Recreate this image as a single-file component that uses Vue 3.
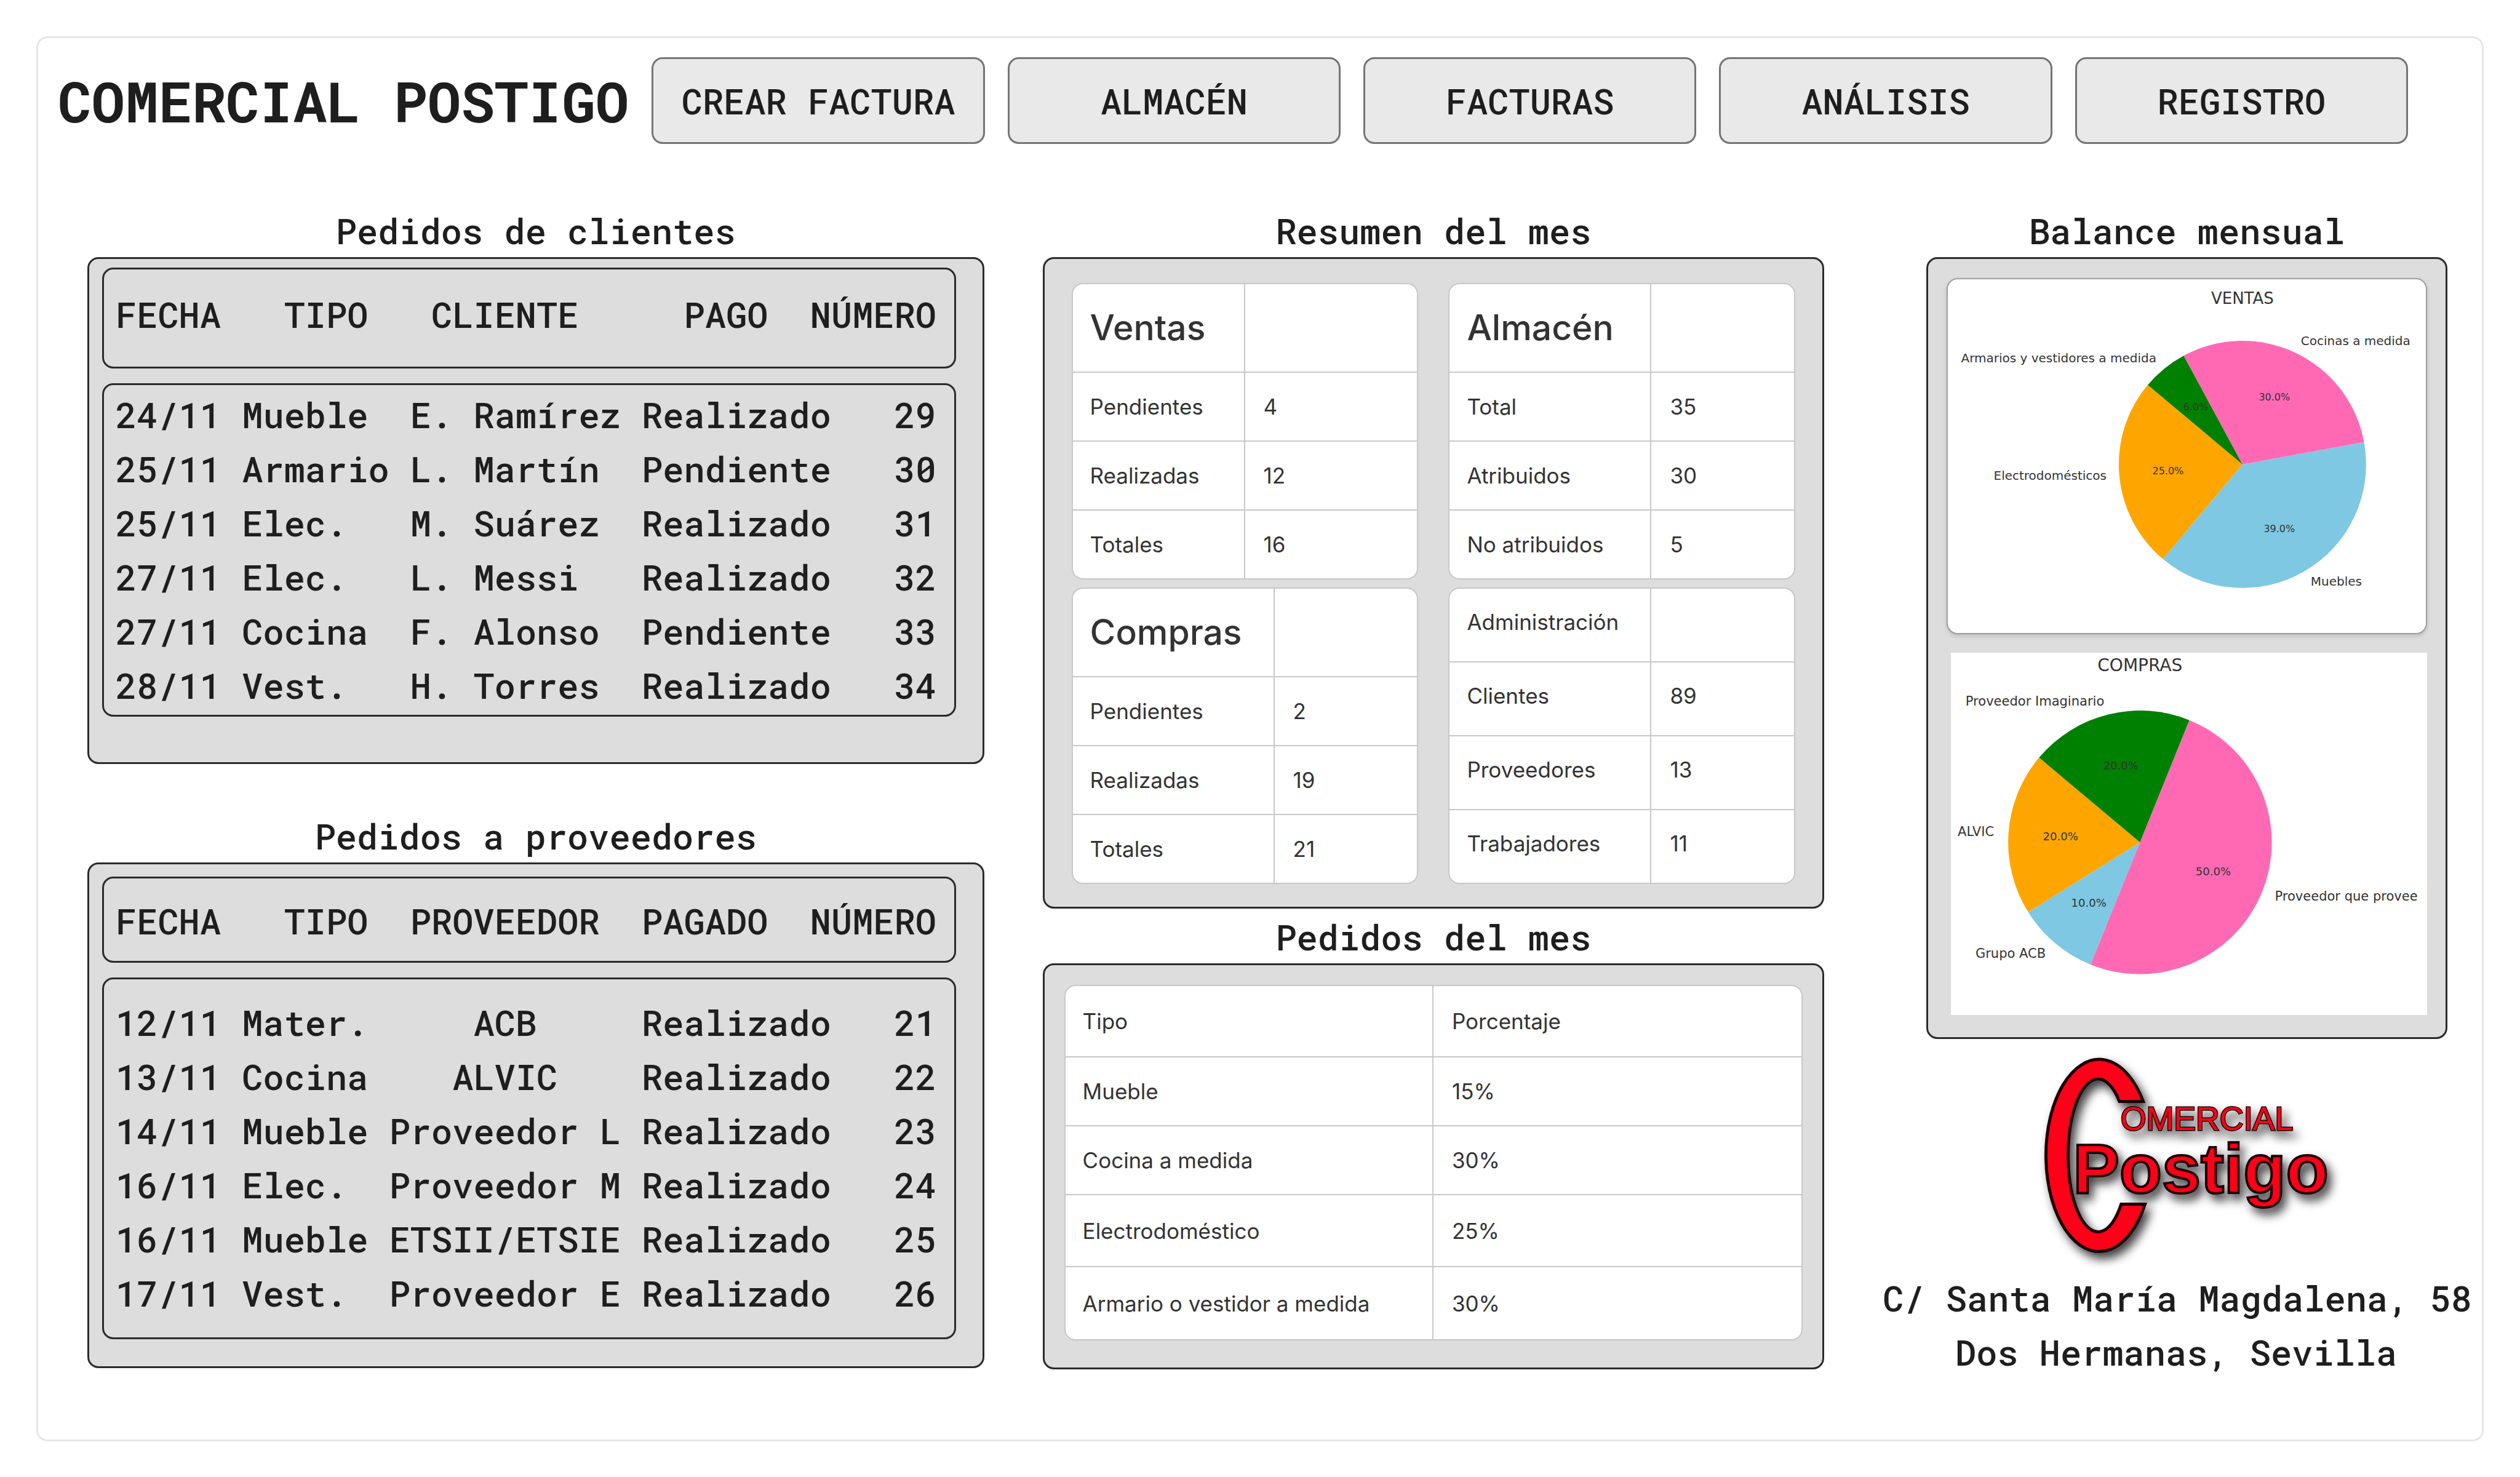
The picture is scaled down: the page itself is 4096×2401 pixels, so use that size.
<script setup>
const sections = ['CREAR FACTURA', 'ALMACÉN', 'FACTURAS', 'ANÁLISIS', 'REGISTRO']

const customerOrders = {
  head: ['FECHA', 'TIPO', 'CLIENTE', 'PAGO', 'NÚMERO'],
  rows: [
    ['24/11', 'Mueble', 'E. Ramírez', 'Realizado', '29'],
    ['25/11', 'Armario', 'L. Martín', 'Pendiente', '30'],
    ['25/11', 'Elec.', 'M. Suárez', 'Realizado', '31'],
    ['27/11', 'Elec.', 'L. Messi', 'Realizado', '32'],
    ['27/11', 'Cocina', 'F. Alonso', 'Pendiente', '33'],
    ['28/11', 'Vest.', 'H. Torres', 'Realizado', '34'],
  ],
}

const supplierOrders = {
  head: ['FECHA', 'TIPO', 'PROVEEDOR', 'PAGADO', 'NÚMERO'],
  rows: [
    ['12/11', 'Mater.', 'ACB', 'Realizado', '21'],
    ['13/11', 'Cocina', 'ALVIC', 'Realizado', '22'],
    ['14/11', 'Mueble', 'Proveedor L', 'Realizado', '23'],
    ['16/11', 'Elec.', 'Proveedor M', 'Realizado', '24'],
    ['16/11', 'Mueble', 'ETSII/ETSIE', 'Realizado', '25'],
    ['17/11', 'Vest.', 'Proveedor E', 'Realizado', '26'],
  ],
}

const summary = [
  { title: 'Ventas', kind: 'large even', rows: [['Pendientes', '4'], ['Realizadas', '12'], ['Totales', '16']] },
  { title: 'Almacén', kind: 'large', rows: [['Total', '35'], ['Atribuidos', '30'], ['No atribuidos', '5']] },
  { title: 'Compras', kind: 'large', rows: [['Pendientes', '2'], ['Realizadas', '19'], ['Totales', '21']] },
  { title: 'Administración', kind: 'regular', rows: [['Clientes', '89'], ['Proveedores', '13'], ['Trabajadores', '11']] },
]

const monthOrders = [
  ['Mueble', '15%'],
  ['Cocina a medida', '30%'],
  ['Electrodoméstico', '25%'],
  ['Armario o vestidor a medida', '30%'],
]

// Wedges run counter-clockwise from 140 degrees.
function wedges(cx, cy, r, parts) {
  let from = 140
  return parts.map(([share, color]) => {
    const to = from + share * 3.6
    const point = (deg) => {
      const a = (deg * Math.PI) / 180
      return `${(cx + r * Math.cos(a)).toFixed(2)} ${(cy - r * Math.sin(a)).toFixed(2)}`
    }
    const d = `M${cx} ${cy}L${point(from)}A${r} ${r} 0 ${share > 50 ? 1 : 0} 0 ${point(to)}Z`
    from = to
    return { d, color }
  })
}

const salesPie = wedges(481, 303, 201, [[25, '#ffa500'], [39, '#7ec8e3'], [30, '#ff69b4'], [6, '#008000']])
const purchasePie = wedges(307, 308, 214, [[20, '#ffa500'], [10, '#7ec8e3'], [50, '#ff69b4'], [20, '#008000']])

const salesLabels = [
  { text: 'Armarios y vestidores a medida', x: 341, y: 137, anchor: 'end' },
  { text: 'Cocinas a medida', x: 576, y: 109, anchor: 'start' },
  { text: 'Electrodomésticos', x: 260, y: 328, anchor: 'end' },
  { text: 'Muebles', x: 592, y: 500, anchor: 'start' },
]
const salesShares = [
  { text: '30.0%', x: 533, y: 199 },
  { text: '6.0%', x: 405, y: 215 },
  { text: '25.0%', x: 360, y: 319 },
  { text: '39.0%', x: 541, y: 413 },
]
const purchaseLabels = [
  { text: 'Proveedor Imaginario', x: 249, y: 86, anchor: 'end' },
  { text: 'ALVIC', x: 70, y: 298, anchor: 'end' },
  { text: 'Grupo ACB', x: 154, y: 496, anchor: 'end' },
  { text: 'Proveedor que provee', x: 526, y: 403, anchor: 'start' },
]
const purchaseShares = [
  { text: '20.0%', x: 276, y: 190 },
  { text: '20.0%', x: 178, y: 305 },
  { text: '10.0%', x: 224, y: 413 },
  { text: '50.0%', x: 426, y: 362 },
]
</script>

<template>
  <div class="frame">
    <header class="top">
      <h1>COMERCIAL POSTIGO</h1>
      <nav>
        <button v-for="s in sections" :key="s" type="button">{{ s }}</button>
      </nav>
    </header>

    <main>
      <div class="column">
        <section>
          <h2>Pedidos de clientes</h2>
          <div class="panel orders customers">
            <table>
              <thead>
                <tr><th v-for="h in customerOrders.head" :key="h" scope="col">{{ h }}</th></tr>
              </thead>
              <tbody>
                <tr v-for="row in customerOrders.rows" :key="row[4]">
                  <td v-for="(cell, i) in row" :key="i">{{ cell }}</td>
                </tr>
              </tbody>
            </table>
          </div>
        </section>
        <section class="second">
          <h2>Pedidos a proveedores</h2>
          <div class="panel orders suppliers">
            <table>
              <thead>
                <tr><th v-for="h in supplierOrders.head" :key="h" scope="col">{{ h }}</th></tr>
              </thead>
              <tbody>
                <tr v-for="row in supplierOrders.rows" :key="row[4]">
                  <td v-for="(cell, i) in row" :key="i">{{ cell }}</td>
                </tr>
              </tbody>
            </table>
          </div>
        </section>
      </div>

      <div class="column">
        <section>
          <h2>Resumen del mes</h2>
          <div class="panel summary">
            <table v-for="card in summary" :key="card.title" class="card" :class="card.kind">
              <thead>
                <tr><th scope="col">{{ card.title }}</th><td></td></tr>
              </thead>
              <tbody>
                <tr v-for="row in card.rows" :key="row[0]">
                  <th scope="row">{{ row[0] }}</th>
                  <td>{{ row[1] }}</td>
                </tr>
              </tbody>
            </table>
          </div>
        </section>
        <section class="month">
          <h2>Pedidos del mes</h2>
          <div class="panel share">
            <table class="card even">
              <thead>
                <tr><th scope="col">Tipo</th><th scope="col">Porcentaje</th></tr>
              </thead>
              <tbody>
                <tr v-for="row in monthOrders" :key="row[0]">
                  <th scope="row">{{ row[0] }}</th>
                  <td>{{ row[1] }}</td>
                </tr>
              </tbody>
            </table>
          </div>
        </section>
      </div>

      <div class="column">
        <section class="balance">
          <h2>Balance mensual</h2>
          <div class="panel charts">
            <svg class="chart rounded" viewBox="0 0 777 575" role="img" aria-label="Ventas por tipo">
              <g transform="translate(-2 -2)">
                <path v-for="w in salesPie" :key="w.color" :d="w.d" :fill="w.color" />
                <text class="chart-title" x="481" y="42" text-anchor="middle">VENTAS</text>
                <text v-for="l in salesLabels" :key="l.text" class="label" :x="l.x" :y="l.y" :text-anchor="l.anchor">{{ l.text }}</text>
                <text v-for="l in salesShares" :key="l.text" class="pct" :x="l.x" :y="l.y" text-anchor="middle">{{ l.text }}</text>
              </g>
            </svg>
            <svg class="chart plain" viewBox="0 0 773 589" role="img" aria-label="Compras por proveedor">
              <path v-for="(w, i) in purchasePie" :key="i" :d="w.d" :fill="w.color" />
              <text class="chart-title wide" x="307" y="30" text-anchor="middle">COMPRAS</text>
              <text v-for="l in purchaseLabels" :key="l.text" class="label wide" :x="l.x" :y="l.y" :text-anchor="l.anchor">{{ l.text }}</text>
              <text v-for="(l, i) in purchaseShares" :key="i" class="pct wide" :x="l.x" :y="l.y" text-anchor="middle">{{ l.text }}</text>
            </svg>
          </div>
        </section>
        <footer>
          <svg class="logo" viewBox="-62 -1 652 379" role="img" aria-label="Comercial Postigo">
            <path class="ring" d="M210 101A87 157 0 1 0 213 269L174 269A49 125 0 1 1 171 101Z" />
            <text class="logo-small" x="173" y="148">OMERCIAL</text>
            <text class="logo-large" x="95" y="250">Postigo</text>
          </svg>
          <address>C/ Santa María Magdalena, 58<br />Dos Hermanas, Sevilla</address>
        </footer>
      </div>
    </main>
  </div>
</template>

<style>
body {
  margin: 0;
  background: #fff;
}
</style>

<style scoped>
.frame {
  box-sizing: border-box;
  margin: 59px;
  padding: 31px 20px 98px 80px;
  border: 3px solid #e6e6e6;
  border-radius: 18px;
  background: #fff;
  color: #1e1e1e;
  font: 500 57px/88px 'Roboto Mono', 'DejaVu Sans Mono', monospace;
}

h1,
h2 {
  margin: 0;
  white-space: nowrap;
}

.top {
  display: flex;
  align-items: center;
  gap: 37px;
  margin: 0 100px 102px -48px;
}

h1 {
  font-size: 91px;
  font-weight: 700;
  line-height: 140px;
}

nav {
  flex: 1;
  display: grid;
  grid-template-columns: repeat(5, 1fr);
  gap: 37px;
}

button {
  height: 141px;
  padding: 0;
  border: 3px solid #757575;
  border-radius: 18px;
  background: #e9e9e9;
  color: inherit;
  font: inherit;
  white-space: nowrap;
}

main {
  display: grid;
  grid-template-columns: 1458fr 1271fr 954fr;
  gap: 95px;
}

.column {
  min-width: 0;
}

h2 {
  padding-bottom: 4px;
  font-size: 57px;
  font-weight: 500;
  line-height: 78px;
  text-align: center;
}

.panel {
  box-sizing: border-box;
  border: 3px solid #2b2b2b;
  border-radius: 18px;
  background: #ddd;
}

.second {
  margin-top: 78px;
}

.month {
  margin-top: 7px;
}

/* Orders: every column is a whole number of characters wide */
.orders {
  padding: 14px 43px 74px 21px;
}

.orders table {
  display: flex;
  flex-direction: column;
  gap: 24px;
}

.orders thead,
.orders tbody {
  display: block;
  border: 3px solid #2b2b2b;
  border-radius: 18px;
  white-space: nowrap;
}

.orders thead {
  padding: 29px 0 41px 19px;
}

.orders tbody {
  padding: 4px 0 4px 19px;
}

.orders tr {
  display: grid;
  grid-template-columns: 6ch 7ch 12ch 9ch 5ch;
}

.orders thead tr {
  grid-template-columns: 6ch 7ch 12ch 8ch 6ch;
}

.orders th,
.orders td {
  padding: 0;
  font-weight: 500;
  text-align: left;
}

.orders th:nth-child(2) {
  padding-right: 1ch;
  text-align: right;
}

.orders th:nth-child(3),
.suppliers td:nth-child(3) {
  padding-right: 1ch;
  text-align: center;
}

.customers td:nth-child(3) {
  padding-left: 1ch;
}

.orders th:nth-child(4) {
  padding-right: 2ch;
  text-align: right;
}

.orders th:nth-child(5),
.orders td:nth-child(5) {
  text-align: right;
}

.suppliers {
  padding: 20px 43px 44px 21px;
}

.suppliers thead {
  padding: 25px 0 21px 19px;
}

.suppliers tbody {
  padding: 26px 0 28px 19px;
}

/* White cards with ruled cells */
.card {
  box-sizing: border-box;
  width: 100%;
  table-layout: fixed;
  border: 2px solid #c8c8c8;
  border-radius: 18px;
  border-spacing: 0;
  overflow: hidden;
  background: #fff;
  color: #333;
  font: 400 35px/44px Inter, sans-serif;
}

.card th,
.card td {
  box-sizing: border-box;
  height: 112px;
  padding: 0 0 0 28px;
  border-bottom: 2px solid #c8c8c8;
  font-weight: 400;
  text-align: left;
  vertical-align: middle;
}

.card > * > tr > :nth-child(2) {
  padding-left: 30px;
}

.card th:first-child {
  width: 328px;
  border-right: 2px solid #c8c8c8;
}

.card.even th:first-child {
  width: 50%;
}

.card tbody tr:last-child > * {
  height: 110px;
  border-bottom: 0;
}

.card.large thead th {
  height: 144px;
  font-size: 57px;
  font-weight: 500;
  line-height: 72px;
}

.card.regular th,
.card.regular td {
  height: 120px;
  padding-bottom: 10px;
}

.card.regular tbody tr:last-child > * {
  height: 118px;
}

.summary {
  display: grid;
  grid-template-columns: 1fr 1fr;
  gap: 13px 49px;
  padding: 39px 44px 37px;
}

.share {
  padding: 32px 32px 44px;
}

.card.share-table th,
.card.share-table td {
  padding-bottom: 2px;
}

.share thead th {
  height: 116px;
}

.share tbody tr:nth-child(3) > *,
.share tbody tr:nth-child(4) > * {
  height: 117px;
}

.balance {
  margin: 0 36px 0 71px;
}

.charts {
  display: flex;
  flex-direction: column;
  gap: 30px;
  padding: 31px 30px 36px;
}

.chart {
  display: block;
  background: #fff;
  fill: #333;
  font-family: 'DejaVu Sans', sans-serif;
}

.rounded {
  border: 2px solid #a0a0a0;
  border-radius: 18px;
  box-shadow: 0 3px 6px rgba(0, 0, 0, 0.15);
}

.plain {
  margin-left: 7px;
}

.chart-title {
  font-size: 26px;
}

.label {
  font-size: 20px;
}

.pct {
  font-size: 16px;
}

.chart-title.wide {
  font-size: 28px;
}

.label.wide {
  font-size: 21px;
}

.pct.wide {
  font-size: 18px;
}

footer {
  text-align: center;
}

.logo {
  display: block;
  width: 68%;
  margin: 0 auto;
  fill: #ff0018;
  stroke: #1c0002;
  filter: drop-shadow(7px 10px 8px rgba(0, 0, 0, 0.75));
}

.ring {
  stroke-width: 5px;
}

.logo-small,
.logo-large {
  font-family: 'Liberation Sans', sans-serif;
}

.logo-small {
  font-size: 54px;
  font-weight: 400;
  stroke-width: 3px;
  paint-order: stroke;
}

.logo-large {
  font-size: 114px;
  font-weight: 700;
  stroke-width: 4px;
}

address {
  font-style: normal;
  white-space: nowrap;
}
</style>
